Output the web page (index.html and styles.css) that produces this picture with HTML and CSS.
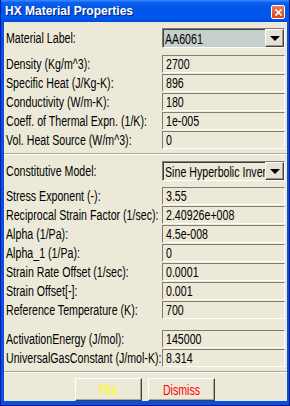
FILE: index.html
```html
<!DOCTYPE html>
<html lang="en">
<head>
    <meta charset="UTF-8">
    <meta name="viewport" content="width=device-width, initial-scale=1.0">
    <title>HX Material Properties</title>
    <link rel="stylesheet" href="styles.css">
</head>
<body>
    <div class="window">
        <div class="titlebar">
            <span class="title">HX Material Properties</span>
            <span class="close">
                <svg width="11" height="11" viewBox="0 0 11 11">
                    <path d="M3 3 L8 8 M8 3 L3 8" stroke="white" stroke-width="1.6" stroke-linecap="square"/>
                </svg>
            </span>
        </div>

        <div class="client">
            <div class="row top">
                <label>Material Label:</label>
                <div class="combo grey">
                    <span class="value"><span class="t">AA6061</span></span>
                    <span class="arrow"><i></i></span>
                </div>
            </div>

            <div class="group first">
                <div class="row"><label>Density (Kg/m^3):</label><div class="field"><span class="t">2700</span></div></div>
                <div class="row"><label>Specific Heat (J/Kg-K):</label><div class="field"><span class="t">896</span></div></div>
                <div class="row"><label>Conductivity (W/m-K):</label><div class="field"><span class="t">180</span></div></div>
                <div class="row"><label>Coeff. of Thermal Expn. (1/K):</label><div class="field"><span class="t">1e-005</span></div></div>
                <div class="row"><label>Vol. Heat Source (W/m^3):</label><div class="field"><span class="t">0</span></div></div>
            </div>

            <div class="sep"></div>

            <div class="row model">
                <label>Constitutive Model:</label>
                <div class="combo">
                    <span class="value"><span class="t">Sine Hyperbolic Inver</span></span>
                    <span class="arrow"><i></i></span>
                </div>
            </div>

            <div class="group second">
                <div class="row"><label>Stress Exponent (-):</label><div class="field"><span class="t">3.55</span></div></div>
                <div class="row"><label>Reciprocal Strain Factor (1/sec):</label><div class="field"><span class="t">2.40926e+008</span></div></div>
                <div class="row"><label>Alpha (1/Pa):</label><div class="field"><span class="t">4.5e-008</span></div></div>
                <div class="row"><label>Alpha_1 (1/Pa):</label><div class="field"><span class="t">0</span></div></div>
                <div class="row"><label>Strain Rate Offset (1/sec):</label><div class="field"><span class="t">0.0001</span></div></div>
                <div class="row"><label>Strain Offset[-]:</label><div class="field"><span class="t">0.001</span></div></div>
                <div class="row"><label>Reference Temperature (K):</label><div class="field"><span class="t">700</span></div></div>
            </div>

            <div class="group third">
                <div class="row"><label>ActivationEnergy (J/mol):</label><div class="field"><span class="t">145000</span></div></div>
                <div class="row"><label>UniversalGasConstant (J/mol-K):</label><div class="field"><span class="t">8.314</span></div></div>
            </div>

            <div class="sep bottom"></div>

            <div class="buttons">
                <button class="btn plot"><span class="t">Plot</span></button>
                <button class="btn dismiss"><span class="t">Dismiss</span></button>
            </div>
        </div>
    </div>
</body>
</html>
```

FILE: styles.css
```css
body {
    margin: 0;
    font-family: "Liberation Sans", Arial, sans-serif;
    font-size: 14px;
    color: #000;
    background: #fff;
}
/* the dialog font is a tall narrow sans; squeeze Liberation Sans to match */
.row label,
.t {
    display: inline-block;
    white-space: nowrap;
    transform: scaleX(0.76);
    transform-origin: left center;
}
.btn .t {
    transform-origin: center center;
}
.window {
    width: 290px;
    height: 406px;
    box-sizing: border-box;
    display: flex;
    flex-direction: column;
    background: #0a4fe0;
    border-left: 1px solid #0019a8;
    border-right: 1px solid #001a86;
    border-bottom: 1px solid #001a86;
}
.titlebar {
    height: 22px;
    flex-shrink: 0;
    display: flex;
    align-items: center;
    justify-content: space-between;
    padding: 0 4px 0 4px;
    background: linear-gradient(to bottom, #3c8dff 0%, #0a5ff0 12%, #0055e8 45%, #0059f0 80%, #0048d8 100%);
}
.title {
    font-weight: bold;
    font-size: 12px;
    color: #fff;
    text-shadow: 1px 1px 0 #0a1f80;
}
.close {
    width: 12px;
    height: 12px;
    margin-top: 2px;
    border: 1px solid #fff;
    border-radius: 2px;
    background: linear-gradient(to bottom, #ee7a5a, #d9401c);
    display: flex;
    align-items: center;
    justify-content: center;
}
.client {
    flex: 1;
    margin: 0 2px 4px 3px;
    padding: 6px 1px 0 2px;
    background: #ece9d8;
    display: flex;
    flex-direction: column;
}
.row {
    display: grid;
    grid-template-columns: 156px 123px;
    align-items: center;
    height: 18px;
}
.group {
    display: flex;
    flex-direction: column;
    gap: 1px;
}
.group.first {
    margin-top: 7px;
}
.group.second {
    margin-top: 6px;
}
.group.third {
    margin-top: 11px;
}
.row.top,
.row.model {
    height: 20px;
}
.field {
    height: 18px;
    box-sizing: border-box;
    padding-left: 3px;
    line-height: 16px;
    border-top: 1px solid #7f7c70;
    border-left: 1px solid #7f7c70;
    border-right: 1px solid #fff;
    border-bottom: 1px solid #fff;
    white-space: nowrap;
    overflow: hidden;
}
.combo {
    height: 20px;
    box-sizing: border-box;
    display: flex;
    border-top: 1px solid #7f7c70;
    border-left: 1px solid #7f7c70;
    border-right: 1px solid #fff;
    border-bottom: 1px solid #fff;
}
.combo .value {
    flex: 1;
    padding-left: 1px;
    line-height: 18px;
    white-space: nowrap;
    overflow: hidden;
    border-top: 1px solid #404040;
    border-left: 1px solid #404040;
    box-sizing: border-box;
}
.combo.grey .value {
    background: #c5cfcc;
}
.arrow {
    width: 19px;
    flex-shrink: 0;
    box-sizing: border-box;
    display: flex;
    align-items: center;
    justify-content: center;
    background: #e6e3d6;
    border-top: 1px solid #fff;
    border-left: 1px solid #fff;
    border-right: 1px solid #404040;
    border-bottom: 1px solid #404040;
    box-shadow: inset -1px -1px 0 #9d9a8c;
}
.arrow i {
    width: 0;
    height: 0;
    border-left: 5px solid transparent;
    border-right: 5px solid transparent;
    border-top: 5px solid #000;
    margin-top: 1px;
}
.sep {
    height: 0;
    margin: 4px 0 6px -2px;
    margin-right: -1px;
    border-top: 1px solid #aca899;
    border-bottom: 1px solid #fff;
}
.sep.bottom {
    margin-bottom: 5px;
}
.buttons {
    display: flex;
    justify-content: center;
    gap: 6px;
    padding-right: 2px;
}
.btn {
    width: 67px;
    height: 23px;
    font-family: inherit;
    font-size: 14px;
    background: #ece9d8;
    border: none;
    border-top: 1px solid #fff;
    border-left: 1px solid #fff;
    border-right: 1px solid #404040;
    border-bottom: 1px solid #404040;
    box-shadow: inset -1px -1px 0 #aca899;
    padding: 0;
}
.plot {
    color: #ffff00;
}
.dismiss {
    color: #ff0000;
}
```
